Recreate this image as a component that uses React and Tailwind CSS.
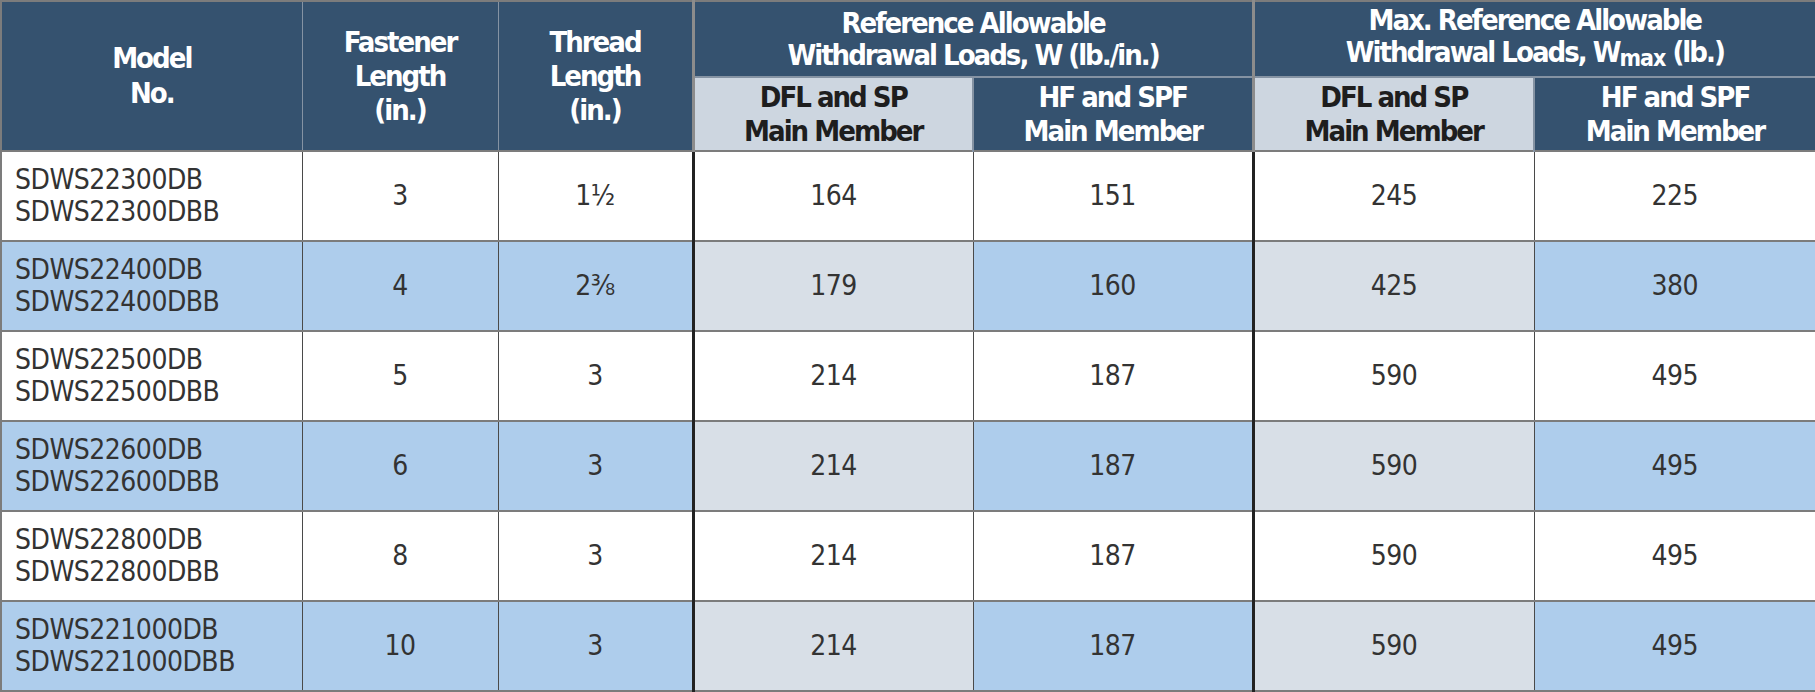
import React from "react";

const rows = [
  { model: ["SDWS22300DB", "SDWS22300DBB"], fastener: "3", thread: "1½", w1: "164", w2: "151", m1: "245", m2: "225" },
  { model: ["SDWS22400DB", "SDWS22400DBB"], fastener: "4", thread: "2⅜", w1: "179", w2: "160", m1: "425", m2: "380" },
  { model: ["SDWS22500DB", "SDWS22500DBB"], fastener: "5", thread: "3", w1: "214", w2: "187", m1: "590", m2: "495" },
  { model: ["SDWS22600DB", "SDWS22600DBB"], fastener: "6", thread: "3", w1: "214", w2: "187", m1: "590", m2: "495" },
  { model: ["SDWS22800DB", "SDWS22800DBB"], fastener: "8", thread: "3", w1: "214", w2: "187", m1: "590", m2: "495" },
  { model: ["SDWS221000DB", "SDWS221000DBB"], fastener: "10", thread: "3", w1: "214", w2: "187", m1: "590", m2: "495" },
];

const App = () => {
  return (
    <div className="w-[1815px] h-[692px] bg-white font-['Liberation_Sans_Narrow','DejaVu_Sans_Condensed',sans-serif]">
      <table className="w-[1815px] table-fixed border-collapse border-2 border-[#7c7c7c]">
        <colgroup>
          <col className="w-[301px]" />
          <col className="w-[196px]" />
          <col className="w-[195px]" />
          <col className="w-[280px]" />
          <col className="w-[280px]" />
          <col className="w-[281px]" />
          <col className="w-[282px]" />
        </colgroup>
        <thead className="text-white font-bold text-[29px] tracking-[-2px]">
          <tr className="h-[76px]">
            <th rowSpan={2} className="bg-[#35526f] border-r border-[#8593a3] leading-[35px] align-middle">
              Model
              <br />
              No.
            </th>
            <th rowSpan={2} className="bg-[#35526f] border-r border-[#8593a3] leading-[34px] align-middle">
              Fastener
              <br />
              Length
              <br />
              (in.)
            </th>
            <th rowSpan={2} className="bg-[#35526f] border-r-[3px] border-[#8c8c8c] leading-[34px] align-middle">
              Thread
              <br />
              Length
              <br />
              (in.)
            </th>
            <th colSpan={2} className="bg-[#35526f] border-r-[3px] border-b-2 border-[#8c8c8c] border-b-[#8593a3] leading-[32px] align-middle">
              Reference Allowable
              <br />
              Withdrawal Loads, W (lb./in.)
            </th>
            <th colSpan={2} className="bg-[#35526f] border-b-2 border-[#8593a3] leading-[32px] align-middle">
              Max. Reference Allowable
              <br />
              Withdrawal Loads, W<span className="text-[23px] tracking-[-1px] align-[-4px]">max</span> (lb.)
            </th>
          </tr>
          <tr className="h-[74px] leading-[34px]">
            <th className="bg-[#cdd6e0] text-[#1e1e1e] border-r-2 border-[#8593a3]">
              DFL and SP
              <br />
              Main Member
            </th>
            <th className="bg-[#35526f] border-r-[3px] border-[#8c8c8c]">
              HF and SPF
              <br />
              Main Member
            </th>
            <th className="bg-[#cdd6e0] text-[#1e1e1e] border-r-2 border-[#8593a3]">
              DFL and SP
              <br />
              Main Member
            </th>
            <th className="bg-[#35526f]">
              HF and SPF
              <br />
              Main Member
            </th>
          </tr>
        </thead>
        <tbody className="text-[28px] text-[#333333] tracking-[-0.5px]">
          {rows.map((row, index) => {
            const blue = index % 2 === 1;
            const main = blue ? "bg-[#aecdec]" : "bg-white";
            const gray = blue ? "bg-[#d8dfe7]" : "bg-white";
            return (
              <tr key={index} className="h-[90px] border-t-2 border-[#7c7c7c]">
                <td className={`${main} border-r border-[#4a4a4a] pl-[13px] leading-[32px] align-middle`}>
                  {row.model[0]}
                  <br />
                  {row.model[1]}
                </td>
                <td className={`${main} border-r border-[#4a4a4a] text-center`}>{row.fastener}</td>
                <td className={`${main} border-r-[3px] border-[#222222] text-center`}>{row.thread}</td>
                <td className={`${gray} border-r border-[#4a4a4a] text-center`}>{row.w1}</td>
                <td className={`${main} border-r-[3px] border-[#222222] text-center`}>{row.w2}</td>
                <td className={`${gray} border-r border-[#4a4a4a] text-center`}>{row.m1}</td>
                <td className={`${main} text-center`}>{row.m2}</td>
              </tr>
            );
          })}
        </tbody>
      </table>
    </div>
  );
};

export default App;
